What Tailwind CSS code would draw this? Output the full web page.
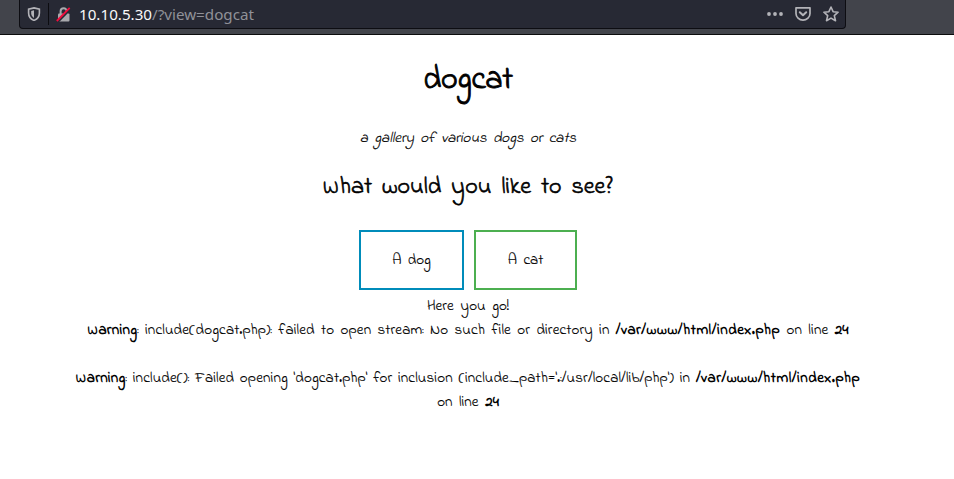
<!DOCTYPE html>
<html lang="en">
<head>
<meta charset="utf-8">
<title>dogcat</title>
<script src="https://cdn.jsdelivr.net/npm/@tailwindcss/browser@4"></script>
</head>
<body class="h-[479px] overflow-hidden bg-white text-black">
<header class="h-[35px] border-b border-[#0c0c0d] bg-[#42444b] pl-[19px]">
  <div class="flex h-[29px] w-[827px] items-center rounded-b-[4px] border border-t-0 border-[#0d0d12] bg-[#272934] font-['Noto_Sans',sans-serif]">
    <svg class="ml-[7px] size-[14px] shrink-0" viewBox="0 0 14 14" fill="none" stroke="#b3b3b8" stroke-width="1.6"><path d="M7 .9 12.4 2.1V6C12.4 9.8 10 12.3 7 13.4 4 12.3 1.6 9.8 1.6 6V2.1Z"/><path d="M7 3.2 4.2 3.9V6.3C4.2 8.4 5.4 10 7 10.9Z" fill="#b3b3b8" stroke="none"/></svg>
    <div class="ml-[7px] h-[22px] w-px bg-[#0c0c10]"></div>
    <svg class="ml-[7px] size-[15px] shrink-0" viewBox="0 0 15 15" fill="none"><path d="M4.6 7V4.3a3.1 3.1 0 0 1 6.2 0V7" stroke="#a9a9ad" stroke-width="2"/><rect x="2" y="6.5" width="11.5" height="8" rx="1" fill="#a9a9ad"/><path d="M2 14.8 15 1.5" stroke="#272934" stroke-width="2"/><path d="M.8 14 13.7 .8" stroke="#f40b3c" stroke-width="1.8"/></svg>
    <div class="ml-[8px] text-[15.2px] leading-[22px] whitespace-nowrap text-[#909198]"><span class="text-[#f9f9fa]">10.10.5.30</span>/?view=dogcat</div>
    <div class="mr-[6px] ml-auto flex items-center">
      <svg class="h-4 w-[18px]" viewBox="0 0 18 16" fill="#b3b3b8"><circle cx="2" cy="8" r="1.9"/><circle cx="8" cy="8" r="1.9"/><circle cx="14" cy="8" r="1.9"/></svg>
      <svg class="ml-[10px] size-4" viewBox="0 0 16 16" fill="none" stroke="#b3b3b8" stroke-width="1.7" stroke-linejoin="round" stroke-linecap="round"><path d="M1 1.8H15V7.5A7 6.7 0 0 1 1 7.5Z"/><path d="M4.8 6.2 8 9.3 11.2 6.2" stroke-width="2"/></svg>
      <svg class="ml-[12px] size-4" viewBox="0 0 16 16" fill="none" stroke="#b3b3b8" stroke-width="1.6" stroke-linejoin="round"><path d="M8 1 10.1 5.7 15.1 6.2 11.3 9.6 12.5 14.7 8 12.1 3.5 14.7 4.7 9.6 .9 6.2 5.9 5.7Z"/></svg>
    </div>
  </div>
</header>
<main class="w-[936px] text-center font-['Indie_Flower',Lato,sans-serif] text-[15px] leading-6 [font-variant-ligatures:none] [-webkit-text-stroke:0.15px_black]">
  <h1 class="pt-[22px] text-[32px] leading-[48px] tracking-[-0.3px] [-webkit-text-stroke:0.9px_black]">dogcat</h1>
  <p class="mt-[21px] [word-spacing:2.6px] italic">a gallery of various dogs or cats</p>
  <h2 class="mt-[20px] text-[24px] leading-9 [word-spacing:4px] [-webkit-text-stroke:0.6px_black]"><span class="text-[20px] leading-none tracking-[1px]">W</span>hat would you like to see?</h2>
  <div class="mt-[24px] flex justify-center gap-[10px] [word-spacing:2.6px]">
    <a class="flex h-[60px] w-[105px] items-center justify-center border-2 border-[#008cba]">A dog</a>
    <a class="flex h-[60px] w-[103px] items-center justify-center border-2 border-[#4caf50]">A cat</a>
  </div>
  <div class="mt-[4px] [word-spacing:3px] whitespace-nowrap">
    <p>Here you go!</p>
    <p class="tracking-[0.16px] [word-spacing:2.4px]"><b class="[-webkit-text-stroke:0]"><span class="text-[13px] leading-none tracking-[1px]">W</span><span class="tracking-[0.3px]">arning</span></b>: include(dogcat.php): failed to open stream: No such file or directory in <b class="tracking-[0.58px] [-webkit-text-stroke:0]">/var/www/html/index.php</b> on line <b class="[-webkit-text-stroke:0]">24</b></p>
    <p class="mt-6 tracking-[0.16px] [word-spacing:1.8px]"><b class="[-webkit-text-stroke:0]"><span class="text-[13px] leading-none tracking-[1px]">W</span><span class="tracking-[0.3px]">arning</span></b>: include(): Failed opening 'dogcat.php' for inclusion (include_path='.:/usr/local/lib/php') in <b class="tracking-[0.58px] [-webkit-text-stroke:0]">/var/www/html/index.php</b></p>
    <p>on line <b class="[-webkit-text-stroke:0]">24</b></p>
  </div>
</main>
</body>
</html>
